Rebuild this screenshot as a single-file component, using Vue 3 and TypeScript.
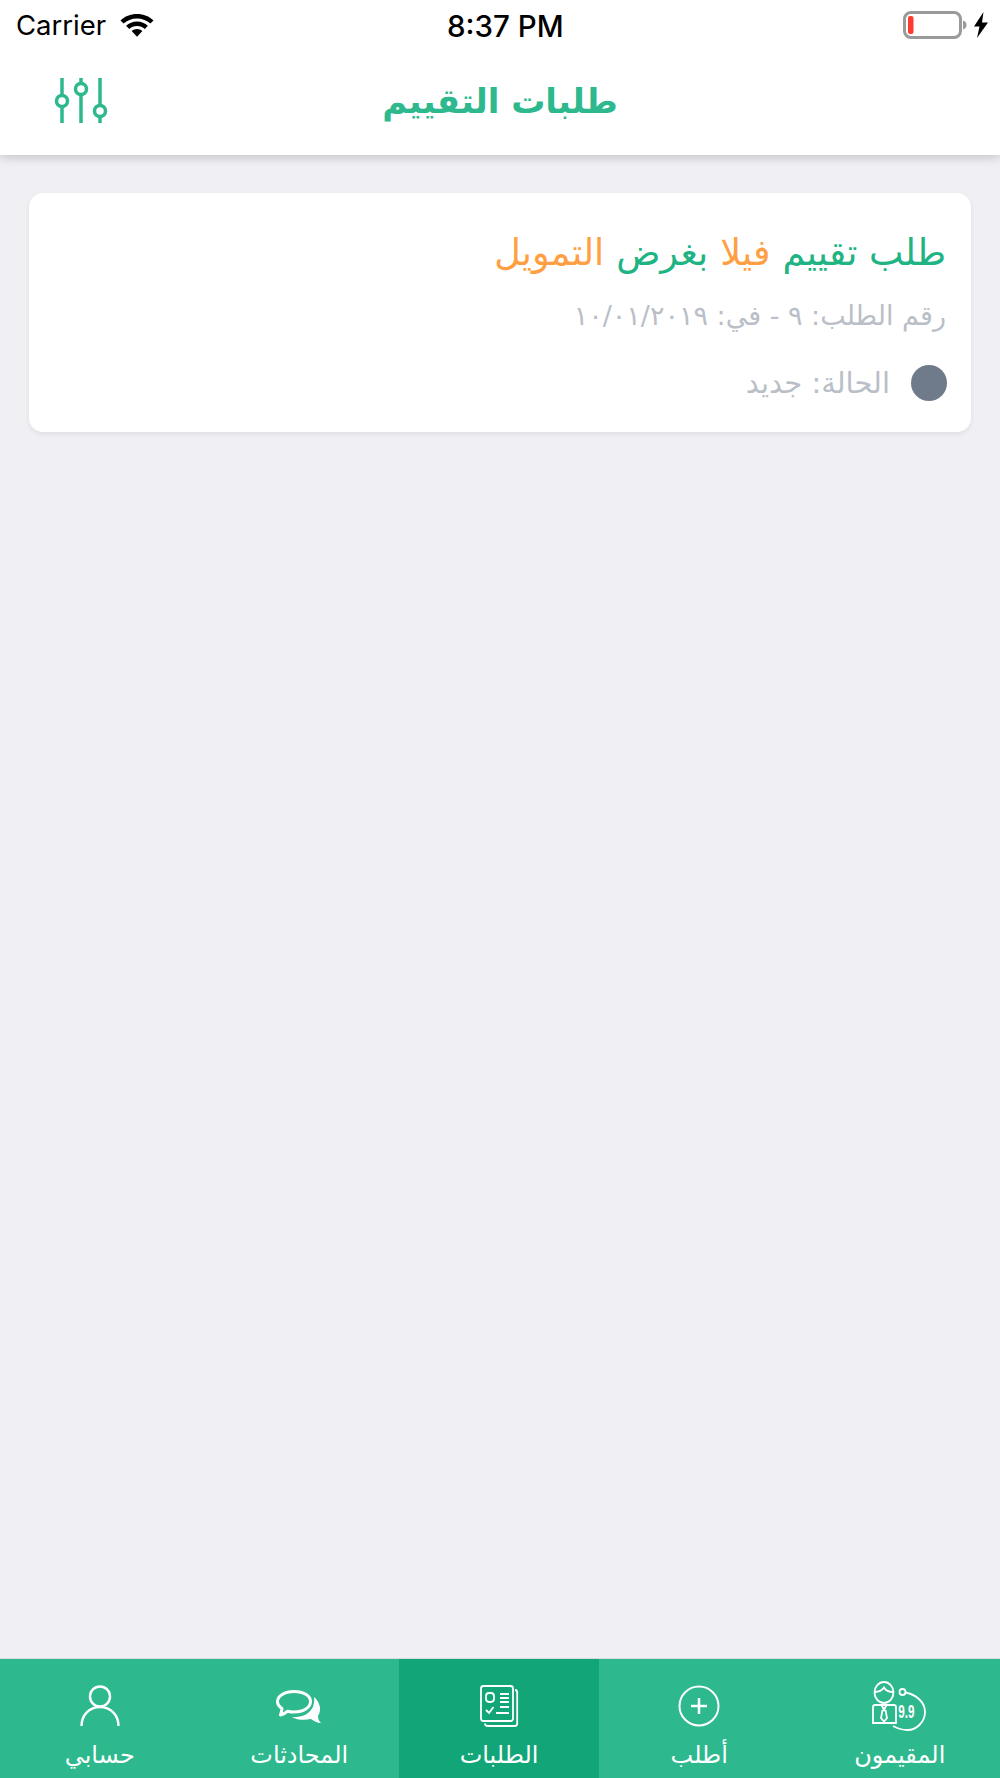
<script setup lang="ts">
</script>

<template>
  <div class="screen">
    <header class="top">
      <div class="status">
        <div class="status-left">
          <span class="carrier">Carrier</span>
          <svg class="wifi" width="36" height="26" viewBox="0 0 36 26">
            <path d="M18 2C11.5 2 5.800 4.400 1.500 8.400L4.600 11.600C8 8.400 12.800 6.400 18 6.400s10 2 13.400 5.200l3.100-3.200C30.200 4.400 24.500 2 18 2z" fill="#000"/>
            <path d="M18 9.500c-4.300 0-8.100 1.600-10.900 4.300l3.100 3.200c2-1.900 4.700-3.100 7.800-3.100s5.800 1.200 7.800 3.100l3.100-3.200C26.100 11.100 22.300 9.500 18 9.500z" fill="#000"/>
            <path d="M18 17c-2.200 0-4 .8-5.400 2.100L18 24.800l5.400-5.700C22 17.800 20.200 17 18 17z" fill="#000"/>
          </svg>
        </div>
        <span class="clock">8:37 PM</span>
        <div class="status-right">
          <svg width="66" height="30" viewBox="0 0 66 30">
            <rect x="2.500" y="2.500" width="56" height="25" rx="6.500" fill="none" stroke="#9a9a9a" stroke-width="3"/>
            <rect x="6" y="6" width="5.500" height="18" rx="2" fill="#ff3b30"/>
            <path d="M61 10.500c2.500.5 3.500 2.500 3.500 4.500s-1 4-3.500 4.500z" fill="#9a9a9a"/>
          </svg>
          <svg width="16" height="26" viewBox="0 0 16 26">
            <path d="M10.500 0L1 14.500h5.500L4 26l11-15.500H9z" fill="#000"/>
          </svg>
        </div>
      </div>
      <div class="nav">
        <svg class="sliders" width="54" height="46" viewBox="0 0 54 46">
          <g fill="none" stroke="#2db88e" stroke-width="3.500">
            <path d="M8 0v17M8 29v16M27 0v5M27 17v28M46 0v27M46 39v6"/>
            <circle cx="8" cy="23" r="5.500"/>
            <circle cx="27" cy="11" r="5.500"/>
            <circle cx="46" cy="33" r="5.500"/>
          </g>
        </svg>
        <h1 class="title">طلبات التقييم</h1>
      </div>
    </header>

    <main class="content">
      <article class="card">
        <p class="heading">
          <span class="green">طلب تقييم</span>
          <span class="orange">فيلا</span>
          <span class="green">بغرض</span>
          <span class="orange">التمويل</span>
        </p>
        <p class="meta">رقم الطلب: ٩ - في: ١٠/٠١/٢٠١٩</p>
        <div class="state">
          <span class="dot"></span>
          <span class="state-text">الحالة: جديد</span>
        </div>
      </article>
    </main>

    <nav class="tabs">
      <div class="tab">
        <div class="icon-box">
          <svg width="60" height="52" viewBox="0 0 60 52">
            <g fill="none" stroke="#fff" stroke-width="1.800">
              <ellipse cx="14" cy="12.500" rx="9.500" ry="10.500"/>
              <path d="M4.500 12c4.500 0 7.500-1.500 9.500-4.500 1.500 3 4.500 4.500 9.500 4.500"/>
              <path d="M5 25h19a2 2 0 0 1 2 2v16H3V27a2 2 0 0 1 2-2z"/>
              <path d="M11.500 25l2.500 5 2.500-5M12.500 30l-1.500 8 3 3.500 3-3.500-1.500-8"/>
              <circle cx="32.500" cy="12" r="3"/>
              <path d="M35.500 12.500C46 14.500 55 22 55 32c0 10-8.500 18-17.500 18-4 0-10-1.500-14.500-4"/>
            </g>
            <text x="43.500" y="38" class="nine" transform="scale(.65 1)">9.9</text>
          </svg>
        </div>
        <span class="label">المقيمون</span>
      </div>
      <div class="tab">
        <div class="icon-box">
          <svg width="44" height="44" viewBox="0 0 44 44">
            <circle cx="22" cy="22" r="19.500" fill="none" stroke="#fff" stroke-width="2"/>
            <path d="M22 14v16M14 22h16" fill="none" stroke="#fff" stroke-width="2.500"/>
          </svg>
        </div>
        <span class="label">أطلب</span>
      </div>
      <div class="tab active">
        <div class="icon-box">
          <svg width="44" height="44" viewBox="0 0 44 44">
            <g fill="none" stroke="#fff" stroke-width="1.800">
              <rect x="4" y="2" width="32" height="35" rx="2.500"/>
              <path d="M38 6c1.500 0 2.200 1 2.200 2.500V39.500c0 1.500-1 2.500-2.500 2.500H11c-1.500 0-3-1-3-2.500"/>
              <rect x="9" y="9" width="8" height="9" rx="3.200"/>
              <path d="M9 26l3 3 4.500-6"/>
            </g>
            <path d="M23 10h9M23 14h9M23 18h9M23 23h9M19 29h13" stroke="#fff" stroke-width="2.200"/>
          </svg>
        </div>
        <span class="label">الطلبات</span>
      </div>
      <div class="tab">
        <div class="icon-box">
          <svg width="50" height="40" viewBox="0 0 50 40">
            <path d="M40 11C46 16 48 24 44 30C44 33 45 35 47 37C43 37 40 35 37 33C30 34.500 23 34 18 31C28 32 42 27 40 11Z" fill="#fff"/>
            <path d="M20 5.500C10.500 5.500 3.500 10 3.500 15.500c0 2.800 1.700 5.200 4.500 7-.2 2.300-.8 4.500-1.500 6.500 2.800-.8 5.300-2 7.200-3.800 1.900.5 4 .8 6.300.8 9.500 0 16.500-4.500 16.500-10.500S29.500 5.500 20 5.500z" fill="none" stroke="#fff" stroke-width="3" stroke-linejoin="round"/>
          </svg>
        </div>
        <span class="label">المحادثات</span>
      </div>
      <div class="tab">
        <div class="icon-box">
          <svg width="40" height="42" viewBox="0 0 40 42">
            <g fill="none" stroke="#fff" stroke-width="2.400">
              <circle cx="20" cy="11.500" r="10"/>
              <path d="M1.500 41c0-11 8-19 18.500-19s18.500 8 18.500 19"/>
            </g>
          </svg>
        </div>
        <span class="label">حسابي</span>
      </div>
    </nav>
  </div>
</template>

<style>
html, body { margin: 0; padding: 0; }
</style>

<style scoped>
.screen {
  width: 1000px;
  height: 1778px;
  display: flex;
  flex-direction: column;
  background: #efeff4;
  overflow: hidden;
  font-family: "DejaVu Sans", "Noto Sans", sans-serif;
}
.top {
  height: 155px;
  background: #fff;
  box-shadow: 0 2px 10px rgba(0, 0, 0, 0.2);
  position: relative;
  z-index: 1;
  flex: none;
}
.status {
  height: 50px;
  display: flex;
  align-items: center;
  justify-content: space-between;
  padding: 0 11px 0 16px;
  position: relative;
  font-family: Inter, sans-serif;
  color: #000;
}
.status-left { display: flex; align-items: center; gap: 13px; }
.carrier { font-size: 27.500px; font-weight: 400; }
.clock {
  position: absolute;
  left: 447px;
  top: 8px;
  font-size: 29.500px;
  font-weight: 500;
}
.status-right { display: flex; align-items: center; gap: 5px; }
.nav {
  height: 105px;
  box-sizing: border-box;
  padding-bottom: 4px;
  display: flex;
  align-items: center;
  justify-content: center;
  position: relative;
}
.sliders { position: absolute; left: 54px; top: 28px; }
.title {
  margin: 0;
  font-size: 34px;
  font-weight: 700;
  color: #2db88e;
  direction: rtl;
}
.content { flex: 1; padding: 38px 29px 0; }
.card {
  height: 239px;
  box-sizing: border-box;
  padding: 38px 25px 0;
  background: #fff;
  border-radius: 14px;
  box-shadow: 0 2px 5px rgba(0, 0, 0, 0.08);
  direction: rtl;
}
.heading {
  margin: 0;
  font-size: 36.500px;
  line-height: 44px;
  font-weight: 400;
  display: flex;
  gap: 12px;
}
.green { color: #20b383; }
.orange { color: #ff9f43; }
.meta {
  margin: 24px 0 0;
  font-size: 27px;
  line-height: 34px;
  color: #b9bec7;
}
.state {
  display: flex;
  align-items: center;
  gap: 21px;
  margin: 32px -1px 0 0;
}
.state-text {
  font-size: 29px;
  line-height: 36px;
  color: #b9bec7;
}
.dot {
  width: 36px;
  height: 36px;
  border-radius: 50%;
  background: #6f7a8a;
  flex: none;
}
.tabs {
  flex: none;
  height: 120px;
  display: grid;
  grid-template-columns: 200.500px 200.500px 200px 199.500px 199.500px;
  direction: rtl;
  background: #2db88e;
  border-top: 1px solid #d9d9de;
  box-sizing: border-box;
}
.tab {
  display: flex;
  flex-direction: column;
  align-items: center;
  padding-top: 21px;
}
.tab.active { background: #12a578; }
.icon-box {
  height: 52px;
  display: flex;
  align-items: center;
  justify-content: center;
}
.label {
  margin-top: 8px;
  color: #fff;
  font-size: 24px;
  line-height: 30px;
}
.nine {
  fill: #fff;
  direction: ltr;
  font-family: "Liberation Sans", sans-serif;
  font-size: 18px;
  font-weight: 700;
}
</style>
